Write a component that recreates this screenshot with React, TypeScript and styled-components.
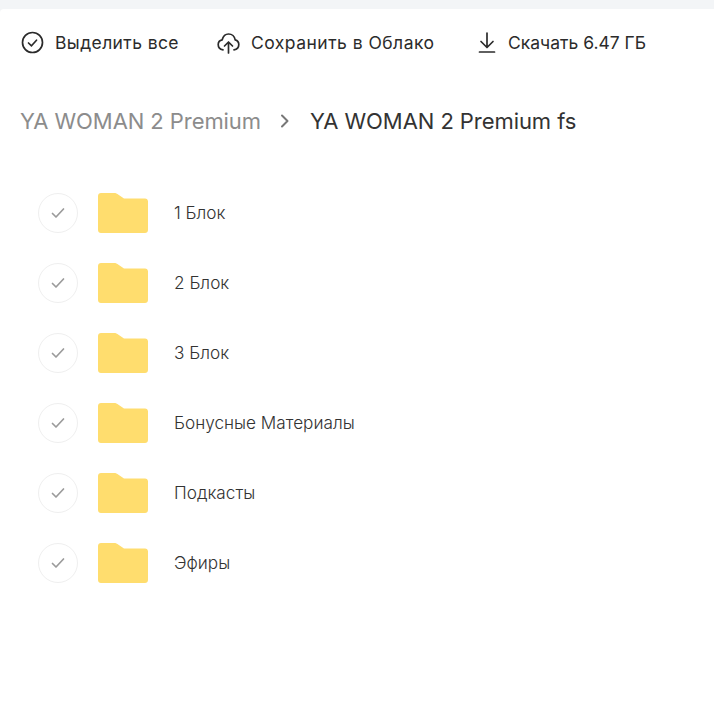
import React from "react";
import styled, { createGlobalStyle } from "styled-components";

const Global = createGlobalStyle`
  html, body { margin: 0; padding: 0; background: #f3f5f7; }
  body { font-family: "Inter", "Noto Sans", sans-serif; }
`;

const Page = styled.div`
  margin-top: 9px;
  height: 695px;
  overflow: hidden;
  background: #fff;
  border-radius: 4px 0 0 0;
`;

const Toolbar = styled.div`
  display: flex;
  align-items: center;
  height: 67px;
  padding-left: 21px;
`;

const Action = styled.div<{ $gap: number; $width: number; $spacing: number }>`
  display: flex;
  align-items: center;
  gap: ${(p) => p.$gap}px;
  width: ${(p) => p.$width}px;
  font-size: 17.5px;
  font-weight: 400;
  letter-spacing: ${(p) => p.$spacing}px;
  color: #2b2b2b;
  white-space: nowrap;
`;

const Crumbs = styled.div`
  display: flex;
  align-items: center;
  height: 44px;
  margin-top: 23px;
  padding-left: 20px;
  font-size: 22px;
  letter-spacing: -0.07px;
  white-space: nowrap;
`;

const CrumbLink = styled.span`
  color: #8c8c8c;
`;

const CrumbCurrent = styled.span`
  color: #333;
`;

const Chevron = styled.svg`
  width: 12px;
  height: 14px;
  margin: 0 19px 0 18px;
  flex: none;
`;

const List = styled.div`
  display: flex;
  flex-direction: column;
  padding: 35px 0 0 38px;
`;

const Row = styled.div`
  display: flex;
  align-items: center;
  height: 70px;
`;

const Check = styled.div`
  width: 38px;
  height: 38px;
  border: 1px solid #efefef;
  border-radius: 50%;
  display: flex;
  align-items: center;
  justify-content: center;
  margin-right: 20px;
  flex: none;
`;

const FolderIcon = styled.svg`
  width: 50px;
  height: 40px;
  margin-right: 26px;
  flex: none;
`;

const Name = styled.span`
  padding-bottom: 2px;
  font-size: 17.2px;
  font-weight: 300;
  color: #333;
`;

const items = ["1 Блок", "2 Блок", "3 Блок", "Бонусные Материалы", "Подкасты", "Эфиры"];

export default function App() {
  return (
    <>
      <Global />
      <Page>
        <Toolbar>
          <Action $gap={11} $width={196} $spacing={0.4}>
            <svg width="23" height="23" viewBox="0 0 23 23" fill="none" stroke="#2b2b2b" strokeWidth="1.7" strokeLinecap="round" strokeLinejoin="round">
              <circle cx="11.5" cy="11.5" r="10" />
              <path d="M7.5 12l3 2.8 5-5.6" />
            </svg>
            Выделить все
          </Action>
          <Action $gap={11} $width={259} $spacing={0.47}>
            <svg width="23" height="23" viewBox="0 0 23 23" fill="none" stroke="#2b2b2b" strokeWidth="1.7" strokeLinecap="round" strokeLinejoin="round">
              <path d="M6 18.800C3 18.500 1.200 16.200 1.200 13.600c0-2.400 1.700-4.400 4-4.800C6 5.600 8.500 3 11.600 3c3.300 0 6 2.600 6.600 5.900 2 .6 3.600 2.500 3.600 4.700 0 2.600-1.800 4.800-4.800 5.200" />
              <path d="M11.500 22V11M7.500 15l4-4 4 4" />
            </svg>
            Сохранить в Облако
          </Action>
          <Action $gap={10} $width={200} $spacing={0}>
            <svg width="22" height="23" viewBox="0 0 22 23" fill="none" stroke="#2b2b2b" strokeWidth="1.7" strokeLinecap="round" strokeLinejoin="round">
              <path d="M11 2v14M5 10.500l6 6 6-6" />
              <path d="M3.500 21h15" />
            </svg>
            Скачать 6.47 ГБ
          </Action>
        </Toolbar>
        <Crumbs>
          <CrumbLink>YA WOMAN 2 Premium</CrumbLink>
          <Chevron viewBox="0 0 12 14" fill="none" stroke="#777" strokeWidth="2" strokeLinecap="round" strokeLinejoin="round">
            <path d="M3 1.500l5.500 5.500L3 12.500" />
          </Chevron>
          <CrumbCurrent>YA WOMAN 2 Premium fs</CrumbCurrent>
        </Crumbs>
        <List>
          {items.map((n) => (
            <Row key={n}>
              <Check>
                <svg width="14" height="12" viewBox="0 0 14 12" fill="none" stroke="#9b9b9b" strokeWidth="1.7" strokeLinecap="round" strokeLinejoin="round">
                  <path d="M1.500 6.500l3.500 3.500 7.500-8" />
                </svg>
              </Check>
              <FolderIcon viewBox="0 0 50 40">
                <path fill="#ffdd6e" d="M3 0h13c2 0 3 .6 4.500 1.800L26 5.500h21c1.700 0 3 1.300 3 3V37c0 1.700-1.300 3-3 3H3c-1.700 0-3-1.300-3-3V3c0-1.700 1.300-3 3-3z" />
              </FolderIcon>
              <Name>{n}</Name>
            </Row>
          ))}
        </List>
      </Page>
    </>
  );
}
